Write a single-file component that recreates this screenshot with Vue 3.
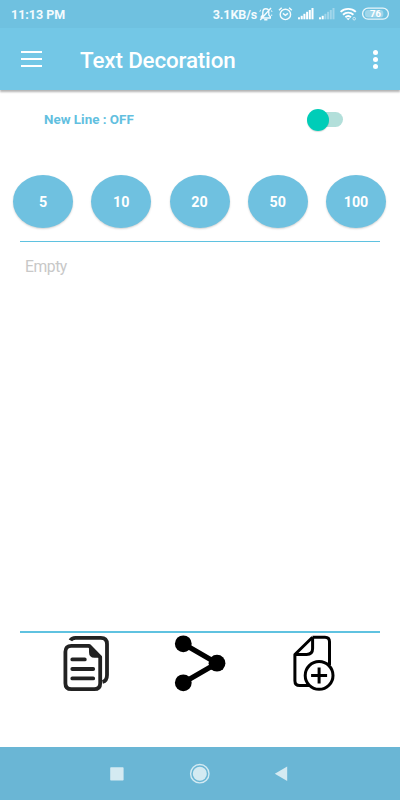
<template>
  <div class="screen">
    <header class="status">
      <span class="status__time">11:13 PM</span>
      <span class="status__speed">3.1KB/s</span>
      <svg class="status__icons" viewBox="0 0 132 20" width="132" height="20">
        <!-- muted bell -->
        <g fill="none" stroke="#f4fbfe" stroke-width="1.4">
          <path d="M3.3 14V12.7L4.8 11V8.5C4.8 6 6 4.8 7.8 4.8c1.8 0 3 1.2 3 3.7V11l1.5 1.7V14zM6.2 15.7h3.2M2.2 16L13 4" />
          <path d="M1.8 7.8l.8-2M14 8l-.6-1.6M13.7 10.5v1.5" stroke-width=".9" />
        </g>
        <!-- alarm -->
        <g fill="none" stroke="#f5fbfd" stroke-width="1.4">
          <circle cx="27.4" cy="10.4" r="5.2" />
          <path d="M21 6.3l2.7-2.6M31.1 3.7l2.7 2.6M24.9 9.4l2.5 2 2.5-2" />
        </g>
        <!-- signal bars -->
        <rect
          v-for="(h, i) in barHeights"
          :key="'a' + i"
          :x="40 + i * 2.7"
          :y="15.3 - h"
          width="2"
          :height="h"
          fill="#fff"
        />
        <rect
          v-for="(h, i) in barHeights"
          :key="'b' + i"
          :x="61 + i * 2.7"
          :y="15.3 - h"
          width="2"
          :height="h"
          fill="#fff"
          :opacity="i < 2 ? 1 : 0.35"
        />
        <!-- wifi -->
        <g fill="none" stroke="#fff" stroke-width="1.9">
          <path d="M82.6 7.9a11 11 0 0 1 15.2 0M85 10.7a7.6 7.6 0 0 1 10.4 0M87.4 13.3a4.2 4.2 0 0 1 5.6 0" />
        </g>
        <path d="M88.3 14.2h3.8l-1.9 2z" fill="#fff" />
        <circle cx="96.2" cy="14.7" r="1.3" fill="none" stroke="#fff" stroke-width=".9" opacity=".7" />
        <!-- battery -->
        <rect x="104.6" y="4.2" width="25.8" height="11" rx="5.5" fill="none" stroke="#e9f6fa" stroke-width="1.3" />
        <rect x="107" y="6" width="18.3" height="7.4" rx="3" fill="#9fd6ea" />
        <text x="117.4" y="13.1" text-anchor="middle" class="status__battery">76</text>
      </svg>
    </header>

    <div class="toolbar">
      <button class="toolbar__menu" aria-label="Menu">
        <span /><span /><span />
      </button>
      <h1 class="toolbar__title">Text Decoration</h1>
      <button class="toolbar__more" aria-label="More">
        <i /><i /><i />
      </button>
    </div>

    <div class="newline">
      <span class="newline__label">New Line : {{ newLine ? 'ON' : 'OFF' }}</span>
      <button class="switch" :class="{ 'switch--on': newLine }" aria-label="New Line" @click="newLine = !newLine">
        <span class="switch__thumb" />
      </button>
    </div>

    <div class="counts">
      <button v-for="n in counts" :key="n" class="counts__btn">{{ n }}</button>
    </div>

    <main class="output">Empty</main>

    <div class="actions">
      <!-- copy -->
      <svg class="actions__copy" viewBox="0 0 50 60" width="50" height="60">
        <g fill="none" stroke="#222" stroke-width="3.8" stroke-linejoin="round">
          <path d="M8.4 6.4Q9.8 3.8 13.5 3.8H38.8Q45 3.8 45 10V41Q45 46.8 40.5 48" />
          <path d="M27.2 11.8H9.4Q3.4 11.8 3.4 17.8V49.2Q3.4 55.2 9.4 55.2H32.2Q38.2 55.2 38.2 49.2V23z" />
          <path d="M10.3 25.4H22.8M10.3 35H31.2M10.3 44.4H31.2" stroke-linecap="round" />
        </g>
        <path d="M27 11V18Q27 23.8 32.5 23.8H39z" fill="#222" />
      </svg>
      <!-- share -->
      <svg class="actions__share" viewBox="0 0 52 60" width="52" height="60">
        <path d="M9.3 9.8L43 29.2 9.3 48.8" fill="none" stroke="#000" stroke-width="5.2" />
        <circle cx="9.3" cy="9.8" r="8.4" />
        <circle cx="43" cy="29.2" r="8.4" />
        <circle cx="9.3" cy="48.8" r="8.4" />
      </svg>
      <!-- new file -->
      <svg class="actions__new" viewBox="0 0 44 60" width="44" height="60">
        <g fill="none" stroke="#000" stroke-width="3" stroke-linejoin="round">
          <path d="M20.5 3.2H33Q37.5 3.2 37.5 7.7V31" />
          <path d="M20.5 3.2L2.9 20.5V46.8Q2.9 51.6 7.7 51.6H17" />
          <path d="M20.6 3.2V14.5Q20.6 20.4 14.7 20.4H2.9" />
          <circle cx="27.1" cy="41.4" r="13.9" fill="#fff" />
          <path d="M19.1 41.4H35.1M27.1 33.4V49.4" />
        </g>
      </svg>
    </div>

    <nav class="navbar">
      <svg viewBox="0 0 400 53" width="400" height="53" fill="#d4eaf2">
        <rect x="110.2" y="20.2" width="13.4" height="13.4" rx=".8" />
        <circle cx="199.8" cy="26.7" r="7" />
        <circle cx="199.8" cy="26.7" r="9.2" fill="none" stroke="#d4eaf2" stroke-width="1.4" />
        <path d="M274.8 26.7L287.2 19.4V34z" />
      </svg>
    </nav>
  </div>
</template>

<script setup>
import { ref } from 'vue'

const newLine = ref(false)
const counts = [5, 10, 20, 50, 100]
const barHeights = [2, 3.5, 5.5, 7.5, 9.3, 11.3]
</script>

<style>
body { background: #fff; }
</style>

<style scoped>
.screen {
  width: 400px;
  height: 800px;
  display: flex;
  flex-direction: column;
  overflow: hidden;
  background: #fff;
  font-family: Roboto, sans-serif;
}
.screen * { box-sizing: border-box; }
button { border: none; padding: 0; background: none; font-family: inherit; }

.status {
  height: 28px;
  flex: none;
  display: flex;
  align-items: center;
  padding: 0 10px 0 11px;
  background: #6fc1e0;
  color: #f4fbfe;
  font-size: 12.5px;
  font-weight: 700;
}
.status__time { flex: 1; padding-top: 1px; }
.status__speed { padding-top: 1px; letter-spacing: -0.1px; }
.status__icons { display: block; margin-left: 1px; }
.status__battery { font-size: 9.5px; font-weight: 700; fill: #fff; }

.toolbar {
  height: 62px;
  flex: none;
  display: flex;
  align-items: center;
  padding: 0 21px;
  background: #73c7e6;
  box-shadow: 0 2px 2px rgba(0, 0, 0, 0.3);
}
.toolbar__menu {
  width: 21px;
  display: flex;
  flex-direction: column;
  gap: 5px;
  margin-top: -1px;
}
.toolbar__menu span { height: 2px; background: #fff; }
.toolbar__title {
  flex: 1;
  margin: 2px 0 0 38px;
  font-size: 22.4px;
  font-weight: 500;
  line-height: 28px;
  letter-spacing: -0.15px;
  color: #fff;
}
.toolbar__more {
  width: 7px;
  display: flex;
  flex-direction: column;
  align-items: center;
  gap: 2px;
}
.toolbar__more i { width: 5px; height: 5px; border-radius: 50%; background: #fff; }

.newline {
  height: 60px;
  flex: none;
  display: flex;
  align-items: center;
  justify-content: space-between;
  padding: 0 57px 1px 44px;
}
.newline__label { font-size: 13.4px; font-weight: 700; color: #62bfdf; }
.switch {
  width: 34px;
  height: 15px;
  display: flex;
  align-items: center;
  border-radius: 8px;
  background: #b2dfda;
}
.switch--on { justify-content: flex-end; }
.switch__thumb {
  width: 22px;
  height: 22px;
  flex: none;
  margin-left: -2px;
  border-radius: 50%;
  background: #00cdb8;
  box-shadow: 0 1px 1px rgba(0, 0, 0, 0.15);
}

.counts {
  height: 91px;
  flex: none;
  display: flex;
  justify-content: space-between;
  padding: 25px 14px 0 13px;
}
.counts__btn {
  width: 60px;
  height: 53px;
  padding-top: 1px;
  border-radius: 50%;
  background: #6fc1e0;
  color: #fff;
  font-size: 14.3px;
  font-weight: 700;
  box-shadow: 0 1px 2px rgba(0, 0, 0, 0.18);
}

.output {
  flex: 1;
  margin: 0 20px;
  padding: 15px 5px;
  border-top: 1px solid #5fc2e0;
  border-bottom: 2px solid #5fc2e0;
  font-size: 15.7px;
  line-height: 20px;
  letter-spacing: -0.45px;
  color: #c8c8c8;
}

.actions {
  height: 114px;
  flex: none;
  display: flex;
  padding: 1px 0 0 62px;
}
.actions__share { margin-left: 62px; }
.actions__new { margin-left: 66px; }

.navbar { height: 53px; flex: none; background: #6ab6d5; }
.navbar svg { display: block; }
</style>
